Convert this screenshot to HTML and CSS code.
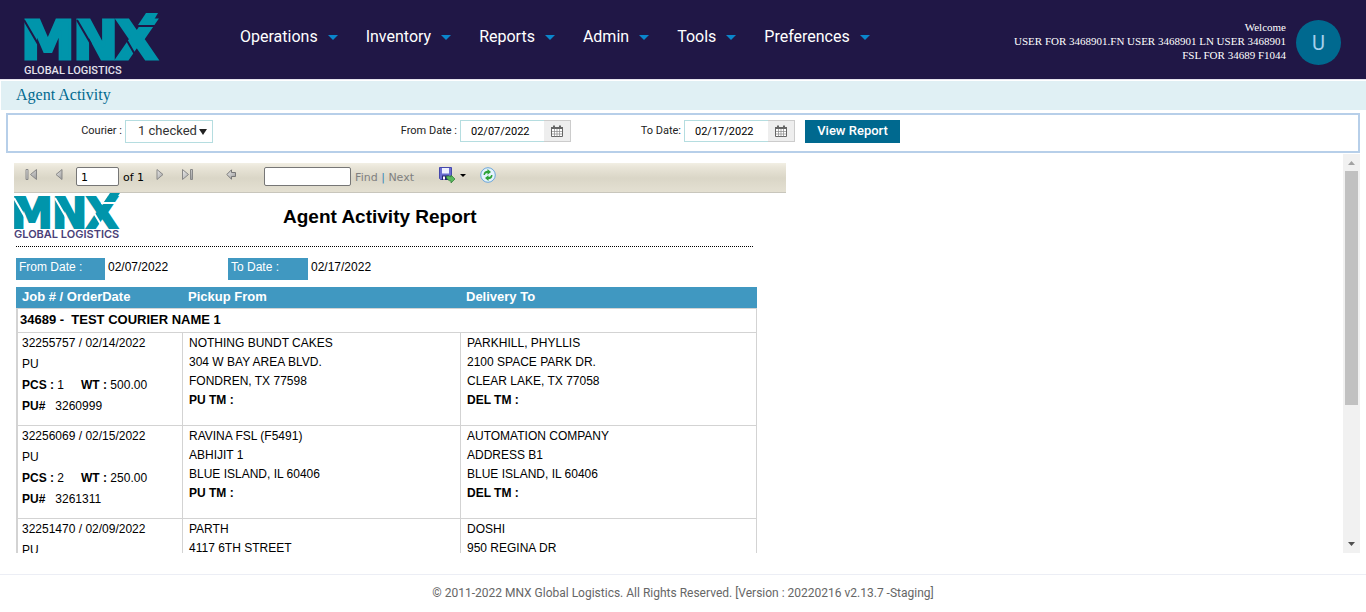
FILE: index.html
```html
<!DOCTYPE html>
<html lang="en">
<head>
<meta charset="utf-8">
<meta name="viewport" content="width=device-width, initial-scale=1">
<title>Agent Activity</title>
<link rel="stylesheet" href="styles.css">
</head>
<body>
<svg width="0" height="0" class="defs" aria-hidden="true">
  <symbol id="cal" viewBox="0 0 12 12">
    <path d="M.5 2.5h11v9H.5z" fill="#fff" stroke="#666"/>
    <path d="M0 2h12v2H0z" fill="#666"/>
    <path d="M3 .5v3M9 .5v3" stroke="#666" stroke-width="2"/>
    <path d="M3.500 4v7.500M6 4v7.500M8.500 4v7.500M1 6.500h10M1 9h10" stroke="#888" stroke-width=".7"/>
  </symbol>
  <linearGradient id="steel" x1="0" x2="1" y1="0" y2="1"><stop offset="0" stop-color="#eee"/><stop offset="1" stop-color="#999"/></linearGradient>
</svg>

<header class="top">
  <a class="brand" href="#" aria-label="MNX Global Logistics">
    <svg width="136" height="64" viewBox="0 0 136 64">
      <g class="mark">
        <text x="-3" y="46">M</text><text x="49" y="46">N</text><text x="92" y="46">X</text>
        <path class="slant" d="M122 0h12l-7 12h-13z"/>
      </g>
      <g class="cut-dark"><path d="M0 7L14 31M53 7L67 31M111 13h22M102 26L113 45"/></g>
      <text class="tag" x="0" y="61">GLOBAL LOGISTICS</text>
    </svg>
  </a>
  <nav class="menu">
    <a href="#">Operations<i></i></a>
    <a href="#">Inventory<i></i></a>
    <a href="#">Reports<i></i></a>
    <a href="#">Admin<i></i></a>
    <a href="#">Tools<i></i></a>
    <a href="#">Preferences<i></i></a>
  </nav>
  <div class="user">
    <div class="who">Welcome<br>USER FOR 3468901.FN USER 3468901 LN USER 3468901<br>FSL FOR 34689 F1044</div>
    <button class="avatar" type="button">U</button>
  </div>
</header>

<h1 class="page-title">Agent Activity</h1>

<form class="filters">
  <div class="field">
    <label for="courier">Courier :</label>
    <span class="picker">
      <select id="courier"><option>1 checked</option></select>
      <svg width="8" height="6" viewBox="0 0 8 6" aria-hidden="true"><path d="M0 0h8L4 6z" fill="#222"/></svg>
    </span>
  </div>
  <div class="field">
    <label for="from">From Date :</label>
    <span class="date"><input id="from" type="text" value="02/07/2022"><button type="button" aria-label="Open calendar"><svg width="12" height="12"><use href="#cal"/></svg></button></span>
  </div>
  <div class="field">
    <label for="to">To Date:</label>
    <span class="date"><input id="to" type="text" value="02/17/2022"><button type="button" aria-label="Open calendar"><svg width="12" height="12"><use href="#cal"/></svg></button></span>
  </div>
  <button class="view" type="button">View Report</button>
</form>

<main class="viewer">
  <div class="sheet">
    <div class="toolbar">
      <button type="button" class="first" aria-label="First page"><svg width="13" height="12" viewBox="0 0 13 12"><path d="M1 .5h2v10H1zM11.500.5v10L5.500 5.500z" fill="url(#steel)" stroke="#888"/></svg></button>
      <button type="button" class="prev" aria-label="Previous page"><svg width="8" height="12" viewBox="0 0 8 12"><path d="M7 .5v10L1 5.500z" fill="url(#steel)" stroke="#888"/></svg></button>
      <input class="page-no" type="text" value="1" aria-label="Current page">
      <span class="of">of 1</span>
      <button type="button" class="next" aria-label="Next page"><svg width="8" height="12" viewBox="0 0 8 12"><path d="M1 .5v10l6-5z" fill="url(#steel)" stroke="#888"/></svg></button>
      <button type="button" class="last" aria-label="Last page"><svg width="13" height="12" viewBox="0 0 13 12"><path d="M1.500.5v10l6-5zM9.500.5h2v10h-2z" fill="url(#steel)" stroke="#888"/></svg></button>
      <button type="button" class="back" aria-label="Back"><svg width="10" height="12" viewBox="0 0 10 12"><path d="M5.500.8v2.700h4v4h-4v2.700L.8 5.500z" fill="url(#steel)" stroke="#777"/></svg></button>
      <input class="search" type="text" aria-label="Find text">
      <span class="find"><a href="#">Find</a> <b>|</b> <a href="#">Next</a></span>
      <button type="button" class="export" aria-label="Export"><svg width="27" height="17" viewBox="0 0 27 17"><path d="M.5.5h12v12h-11l-1-1z" fill="#6a6dd0" stroke="#4548ac"/><path d="M3 1h7v5.500H3z" fill="#eef1ff"/><path d="M3 8.500h7V13H3z" fill="#23256f"/><path d="M4 9.500h2v3H4z" fill="#fff"/><path d="M7 9.500c2-1 4-.5 5 .5V8l4 4-4 4v-2c-2 0-4-1.500-5-4.500z" fill="#59b85c" stroke="#2c7a35" stroke-width=".7"/><path d="M21 7h6l-3 3z" fill="#000"/></svg></button>
      <button type="button" class="refresh" aria-label="Refresh"><svg width="16" height="16" viewBox="0 0 16 16"><circle cx="8" cy="8" r="7.300" fill="#e4f2fc" stroke="#6ba6da"/><path d="M3.500 8C3.500 5 5.500 3.800 7.500 3.800V2l3.500 3-3.500 2.800V6C6 6 5 6.700 5 8zM12.500 8c0 3-2 4.200-4 4.200V14L5 11l3.500-2.800V10c1.500 0 2.500-.7 2.500-2z" fill="#2ea336"/></svg></button>
    </div>

    <section class="report">
      <div class="report-head">
        <svg class="small-logo" width="108" height="47" viewBox="0 0 108 47" role="img" aria-label="MNX Global Logistics">
          <g class="mark small">
            <text x="-3" y="35">M</text><text x="38" y="35">N</text><text x="72" y="35">X</text>
            <path class="slant" d="M96 0h10l-6 9H90z"/>
          </g>
          <g class="cut-light"><path d="M0 5L11 24M41 5L52 24M87 10h17M80 20L89 35"/></g>
          <text class="tag ink" x="0" y="45">GLOBAL LOGISTICS</text>
        </svg>
        <h2>Agent Activity Report</h2>
      </div>
      <dl class="range">
        <div><dt>From Date :</dt><dd>02/07/2022</dd></div>
        <div><dt class="short">To Date :</dt><dd>02/17/2022</dd></div>
      </dl>
      <table class="jobs">
        <colgroup><col class="c-job"><col class="c-from"><col></colgroup>
        <thead><tr><th>Job # / OrderDate</th><th>Pickup From</th><th>Delivery To</th></tr></thead>
        <tbody>
          <tr class="group"><th colspan="3">34689 -&nbsp; TEST COURIER NAME 1</th></tr>
          <tr>
            <td class="job">32255757 / 02/14/2022<br>PU<div class="pair"><span><b>PCS :</b> 1</span><span><b>WT :</b> 500.00</span></div><div class="pu"><b>PU#</b>3260999</div></td>
            <td>NOTHING BUNDT CAKES<br>304 W BAY AREA BLVD.<br>FONDREN, TX 77598<br><b>PU TM :</b></td>
            <td>PARKHILL, PHYLLIS<br>2100 SPACE PARK DR.<br>CLEAR LAKE, TX 77058<br><b>DEL TM :</b></td>
          </tr>
          <tr>
            <td class="job">32256069 / 02/15/2022<br>PU<div class="pair"><span><b>PCS :</b> 2</span><span><b>WT :</b> 250.00</span></div><div class="pu"><b>PU#</b>3261311</div></td>
            <td>RAVINA FSL (F5491)<br>ABHIJIT 1<br>BLUE ISLAND, IL 60406<br><b>PU TM :</b></td>
            <td>AUTOMATION COMPANY<br>ADDRESS B1<br>BLUE ISLAND, IL 60406<br><b>DEL TM :</b></td>
          </tr>
          <tr>
            <td class="job">32251470 / 02/09/2022<br>PU</td>
            <td>PARTH<br>4117 6TH STREET</td>
            <td>DOSHI<br>950 REGINA DR</td>
          </tr>
        </tbody>
      </table>
    </section>
  </div>
  <div class="scroll" aria-hidden="true">
    <svg width="17" height="17" viewBox="0 0 17 17"><path d="M5 11h7L8.500 7z" fill="#a3a3a3"/></svg>
    <div class="track"><div class="thumb"></div></div>
    <svg width="17" height="17" viewBox="0 0 17 17"><path d="M5 6h7l-3.500 4z" fill="#505050"/></svg>
  </div>
</main>

<footer class="foot">© 2011-2022 MNX Global Logistics. All Rights Reserved. [Version : 20220216 v2.13.7 -Staging]</footer>
</body>
</html>
```
FILE: styles.css
```css
* { box-sizing: border-box; }
body {
  margin: 0;
  height: 100vh;
  display: flex;
  flex-direction: column;
  background: #fff;
  color: #000;
  font-family: Roboto, "Liberation Sans", sans-serif;
}
button { font: inherit; padding: 0; border: 0; background: none; cursor: pointer; }
a { color: inherit; text-decoration: none; }
svg { display: block; overflow: visible; }
.defs { position: absolute; }

/* header */
.top {
  flex: none;
  display: flex;
  align-items: flex-start;
  height: 80px;
  padding: 0 25px 0 24px;
  background: #201746;
  border-bottom: 1px solid #e6e4ee;
}
.brand { flex: none; width: 216px; padding-top: 13px; }
.mark { fill: #0095ab; }
.mark text {
  font: bold 54px "DejaVu Sans", Verdana, sans-serif;
  stroke: #0095ab;
  stroke-width: 3px;
}
.mark.small text { font-size: 42px; stroke-width: 2px; }
.cut-dark { stroke: #201746; stroke-width: 2px; }
.cut-light { stroke: #fff; stroke-width: 2px; }
.tag { font: 500 11px Roboto, sans-serif; fill: #e4e2ec; }
.tag.ink { font: 600 11px Inter, sans-serif; fill: #4a3f78; }
.menu { display: flex; gap: 28px; padding-top: 26px; font-size: 16px; line-height: 21px; color: #fff; }
.menu a { display: flex; align-items: center; gap: 10px; }
.menu i {
  margin-top: 2px;
  border: 5px solid transparent;
  border-top-color: #0a86cc;
  border-bottom: 0;
}
.user { display: flex; gap: 10px; margin-left: auto; padding-top: 20px; }
.who {
  color: #fff;
  font: 11px/14px "Liberation Serif", "Times New Roman", serif;
  text-align: right;
}
.avatar {
  width: 45px;
  height: 45px;
  border-radius: 50%;
  background: #00698f;
  color: #a5d0ec;
  font-size: 20px;
}

.page-title {
  flex: none;
  margin: 1px 0 3px 1px;
  padding: 0 0 2px 15px;
  background: #e0f0f4;
  color: #006a8f;
  font: 16px/27px "Liberation Serif", "Times New Roman", serif;
}

/* filters */
.filters {
  flex: none;
  display: grid;
  grid-template-columns: 205px 358px 224px auto;
  justify-items: end;
  align-items: start;
  margin: 0 6px;
  padding-top: 5px;
  height: 40px;
  border: 2px solid #b7cfe9;
}
.field { display: flex; gap: 3px; font-size: 11px; line-height: 22px; color: #222; }
.picker { position: relative; }
.picker select {
  appearance: none;
  width: 88px;
  height: 23px;
  padding: 0 0 2px 12px;
  border: 1px solid #b5dde0;
  border-radius: 0;
  background: #fff;
  color: #333;
  font: 13px Roboto, sans-serif;
}
.picker svg { position: absolute; right: 6px; top: 9px; pointer-events: none; }
.date { display: flex; width: 111px; height: 22px; }
.date input {
  flex: 1;
  min-width: 0;
  padding: 0 0 0 10px;
  border: 1px solid #b5dde0;
  border-right: 0;
  font: 11px Roboto, sans-serif;
  color: #000;
}
.date button {
  display: grid;
  place-items: center;
  width: 27px;
  border: 1px solid #ccc;
  border-left: 0;
  background: #eee;
}
.view {
  justify-self: start;
  margin-left: 10px;
  width: 95px;
  height: 23px;
  padding-bottom: 2px;
  background: #00698f;
  color: #fff;
  font-size: 13px;
  font-weight: 500;
}

/* report viewer */
.viewer {
  flex: 1;
  min-height: 0;
  display: flex;
  justify-content: space-between;
  margin: 1px 6px 21px 14px;
  overflow: hidden;
}
.sheet { flex: 0 1 772px; padding-top: 9px; }
.toolbar {
  display: flex;
  align-items: flex-start;
  height: 30px;
  padding: 4px 0 0 11px;
  border-bottom: 1px solid #c8c6bc;
  background: linear-gradient(#f2efe4, #e9e5d8 15%, #dad6c7 52%, #e4e0d2);
  font: 11px/21px "DejaVu Sans", Verdana, sans-serif;
}
.toolbar button { margin-top: 2px; }
.toolbar input {
  height: 19px;
  padding: 1px 4px 0;
  border: 1px solid #767676;
  border-radius: 2px;
  font: inherit;
}
.toolbar .prev { margin-left: 17px; }
.toolbar .page-no { width: 43px; margin-left: 13px; }
.of { margin-left: 4px; }
.toolbar .next { margin-left: 12px; }
.toolbar .last { margin-left: 17px; }
.toolbar .back { margin-left: 32px; }
.toolbar .search { width: 87px; margin-left: 28px; }
.find { margin-left: 4px; color: #808080; }
.find b { color: #3b87ba; font-weight: 400; }
.toolbar .export { margin: 0 0 0 25px; }
.toolbar .refresh { margin: 0 0 0 14px; }

.report { font: 12px/19px "Liberation Sans", Arial, sans-serif; }
.report-head {
  display: flex;
  width: 739px;
  height: 53px;
}
.report-head h2 { margin: 12px 0 0 161px; font-size: 19px; line-height: 24px; }
.range {
  display: flex;
  width: 737px;
  margin: 0 0 7px 2px;
  padding-top: 11px;
  border-top: 1px dotted #000;
}
.range div { display: flex; width: 212px; }
.range dt { width: 89px; height: 22px; padding-left: 3px; background: #4098c1; color: #fff; }
.range dt.short { width: 80px; }
.range dd { margin: 0 0 0 3px; }

.jobs {
  width: 741px;
  margin-left: 2px;
  table-layout: fixed;
  border-collapse: separate;
  border-spacing: 0;
}
.c-job { width: 166px; }
.c-from { width: 278px; }
.jobs th { text-align: left; padding: 0 0 0 6px; font-size: 13px; }
.jobs thead th { height: 21px; line-height: 19px; padding-bottom: 2px; background: #4098c1; color: #fff; }
.jobs .group th { height: 24px; padding: 0 0 2px 2px; border-top: 1px solid #d3d3d3; border-left: 2px solid #d3d3d3; border-right: 1px solid #d3d3d3; }
.jobs td {
  height: 93px;
  padding: 1px 0 0 6px;
  vertical-align: top;
  border-top: 1px solid #d3d3d3;
  border-left: 1px solid #d3d3d3;
}
.jobs td:last-child { border-right: 1px solid #d3d3d3; }
.jobs td.job { line-height: 21px; padding: 0 0 0 4px; border-left-width: 2px; }
.pair { display: flex; gap: 17px; }
.pu { display: flex; gap: 10px; }

.scroll { flex: none; display: flex; flex-direction: column; width: 17px; background: #f1f1f1; }
.track { flex: 1; padding: 0 2px; }
.thumb { height: 64%; background: #c1c1c1; }

.foot {
  flex: none;
  height: 38px;
  border-top: 1px solid #eceef5;
  color: #666;
  font-size: 12px;
  line-height: 36px;
  text-align: center;
}
```
